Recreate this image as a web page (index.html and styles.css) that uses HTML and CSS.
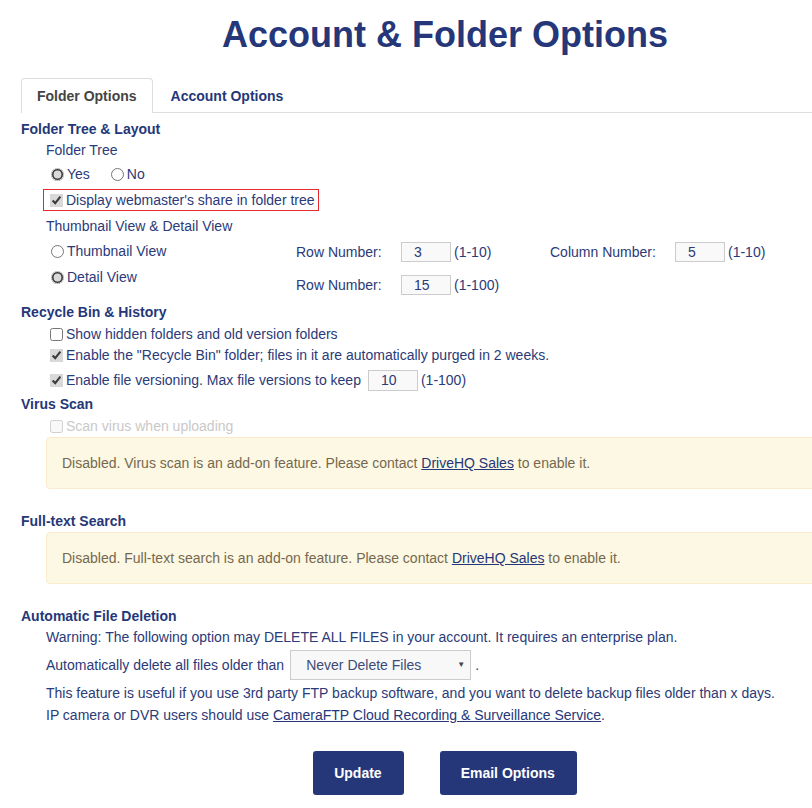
FILE: index.html
```html
<!DOCTYPE html>
<html>
<head>
<meta charset="utf-8">
<link rel="stylesheet" href="styles.css">
</head>
<body>
<div class="wrap">
  <h1 class="title">Account &amp; Folder Options</h1>
  <div class="tabs">
    <div class="tab active">Folder Options</div>
    <div class="tab">Account Options</div>
  </div>

  <div class="sec-title s1">Folder Tree &amp; Layout</div>
  <div class="row ind h22">Folder Tree</div>
  <div class="row ind h26">
    <label class="opt"><input type="radio" name="ft" checked>Yes</label>
    <label class="opt no"><input type="radio" name="ft">No</label>
  </div>
  <div class="row ind h26">
    <label class="redbox"><input type="checkbox" checked>Display webmaster's share in folder tree</label>
  </div>
  <div class="row ind h26">Thumbnail View &amp; Detail View</div>
  <div class="views">
    <div class="view-left">
      <label class="row h26"><input type="radio" name="vw">Thumbnail View</label>
      <label class="row h26"><input type="radio" name="vw" checked>Detail View</label>
    </div>
    <div class="view-right">
      <div class="num-row r1">
        <span class="lbl">Row Number:</span>
        <input class="num" type="text" value="3">
        <span class="rng rng1">(1-10)</span>
        <span class="lbl2">Column Number:</span>
        <input class="num" type="text" value="5">
        <span class="rng">(1-10)</span>
      </div>
      <div class="num-row r2">
        <span class="lbl">Row Number:</span>
        <input class="num" type="text" value="15">
        <span class="rng">(1-100)</span>
      </div>
    </div>
  </div>

  <div class="sec-title">Recycle Bin &amp; History</div>
  <label class="row ind cb h22 mt1"><input type="checkbox">Show hidden folders and old version folders</label>
  <label class="row ind cb h20"><input type="checkbox" checked>Enable the "Recycle Bin" folder; files in it are automatically purged in 2 weeks.</label>
  <div class="row ind cb h30"><label class="cbl"><input type="checkbox" checked>Enable file versioning. Max file versions to keep</label><input class="num ver" type="text" value="10"><span class="rng">(1-100)</span></div>

  <div class="sec-title h18">Virus Scan</div>
  <label class="row ind cb h20 mt3 disabled"><input type="checkbox" disabled>Scan virus when uploading</label>
  <div class="alert">Disabled. Virus scan is an add-on feature. Please contact <a href="#">DriveHQ Sales</a> to enable it.</div>

  <div class="sec-title mt22">Full-text Search</div>
  <div class="alert">Disabled. Full-text search is an add-on feature. Please contact <a href="#">DriveHQ Sales</a> to enable it.</div>

  <div class="sec-title mt22">Automatic File Deletion</div>
  <div class="row ind h20 mt1">Warning: The following option may DELETE ALL FILES in your account. It requires an enterprise plan.</div>
  <div class="row ind h32 mt2">Automatically delete all files older than
    <span class="sel-wrap">
      <select class="sel"><option>Never Delete Files</option></select>
      <span class="arrow">&#9660;</span>
    </span>.
  </div>
  <div class="row ind h20 mt2">This feature is useful if you use 3rd party FTP backup software, and you want to delete backup files older than x days.</div>
  <div class="row ind h20 mt2">IP camera or DVR users should use&nbsp;<a href="#">CameraFTP Cloud Recording &amp; Surveillance Service</a>.</div>

  <div class="buttons">
    <button class="btn">Update</button>
    <button class="btn">Email Options</button>
  </div>
</div>
</body>
</html>
```

FILE: styles.css
```css
html, body {
  margin: 0;
  padding: 0;
  overflow: hidden;
  background: #fff;
}
body {
  font-family: "Liberation Sans", Arial, sans-serif;
  font-size: 14px;
  color: #2b3a78;
}
.wrap {
  width: 848px;
  padding-left: 21px;
}
.title {
  margin: 15px 0 0;
  font-size: 36px;
  line-height: 40px;
  font-weight: bold;
  text-align: center;
  color: #253778;
}
.tabs {
  display: flex;
  margin-top: 23px;
  border-bottom: 1px solid #ddd;
  width: 1000px;
}
.tab {
  padding: 7px 15px 6px;
  line-height: 20px;
  font-weight: bold;
  color: #253778;
  border: 1px solid transparent;
  border-bottom: 0;
  margin-left: 2px;
}
.tab.active {
  margin-left: 0;
  color: #444;
  border-color: #ddd;
  border-radius: 4px 4px 0 0;
  background: #fff;
  margin-bottom: -1px;
  padding-bottom: 7px;
}
.sec-title {
  font-weight: bold;
  color: #253778;
  line-height: 20px;
  height: 20px;
}
.s1 { margin-top: 6px; }
.row {
  display: flex;
  align-items: center;
  white-space: nowrap;
}
.ind { padding-left: 25px; }
.h18 { height: 18px; line-height: 18px; }
.h20 { height: 20px; }
.h22 { height: 22px; }
.h26 { height: 26px; }
.h30 { height: 30px; }
.h32 { height: 32px; }
.mt1 { margin-top: 1px; }
.mt2 { margin-top: 2px; }
.mt3 { margin-top: 3px; }
.mt22 { margin-top: 22px; }

input[type=radio],
input[type=checkbox] {
  accent-color: #d9d9d9;
  width: 13px;
  height: 13px;
}
input[type=radio] {
  margin: 0 3px 0 5px;
}
input[type=checkbox] {
  margin: 0 3px 0 4px;
}
.opt { display: flex; align-items: center; }
.opt.no { margin-left: 16px; }
.redbox {
  display: flex;
  align-items: center;
  height: 20px;
  margin-left: -3px;
  padding: 0 3px 0 2px;
  border: 1px solid #e8282d;
}
.views {
  display: flex;
  height: 64px;
  margin-top: -1px;
}
.view-left {
  width: 250px;
  padding-left: 25px;
}
.view-right {
  display: flex;
  flex-direction: column;
}
.num-row {
  display: flex;
  align-items: center;
  white-space: nowrap;
}
.num-row.r1 { height: 28px; }
.num-row.r2 { height: 29px; margin-top: 4px; }
.lbl { width: 105px; }
.lbl2 { width: 125px; }
.rng1 { width: 96px; }
.num {
  box-sizing: border-box;
  width: 50px;
  height: 20px;
  border: 1px solid #ccc;
  background: #f9f9f9;
  font-family: "Liberation Sans", Arial, sans-serif;
  font-size: 14px;
  color: #2b3a78;
  padding: 0 0 0 12px;
  margin: 0 3px 0 0;
}
.num.ver {
  margin-left: 7px;
  height: 21px;
}
.cbl { display: flex; align-items: center; }
.disabled { color: #c9c9c9; }
.alert {
  margin-left: 25px;
  margin-top: 1px;
  width: 900px;
  box-sizing: border-box;
  height: 52px;
  padding: 15px;
  line-height: 20px;
  background: #fcf8e3;
  border: 1px solid #faebcc;
  border-radius: 4px;
  color: #76684f;
  white-space: nowrap;
}
a {
  color: #253778;
  text-decoration: underline;
}
.sel-wrap {
  position: relative;
  display: inline-block;
  margin: 0 4px 0 6px;
  height: 30px;
}
.sel {
  -webkit-appearance: none;
  appearance: none;
  box-sizing: border-box;
  width: 181px;
  height: 30px;
  border: 1px solid #ccc;
  border-radius: 0;
  background: #f8f8f8;
  font-family: "Liberation Sans", Arial, sans-serif;
  font-size: 14px;
  color: #3d4a78;
  padding: 0 0 0 15px;
  margin: 0;
}
.arrow {
  position: absolute;
  right: 6px;
  top: 10px;
  font-size: 8px;
  color: #444;
  pointer-events: none;
}
.buttons {
  display: flex;
  justify-content: center;
  gap: 36px;
  margin-top: 26px;
}
.btn {
  height: 44px;
  padding: 0 22px 0 21px;
  border: 0;
  border-radius: 3px;
  background: #253778;
  color: #fff;
  font-family: "Liberation Sans", Arial, sans-serif;
  font-size: 14px;
  font-weight: bold;
}
```
